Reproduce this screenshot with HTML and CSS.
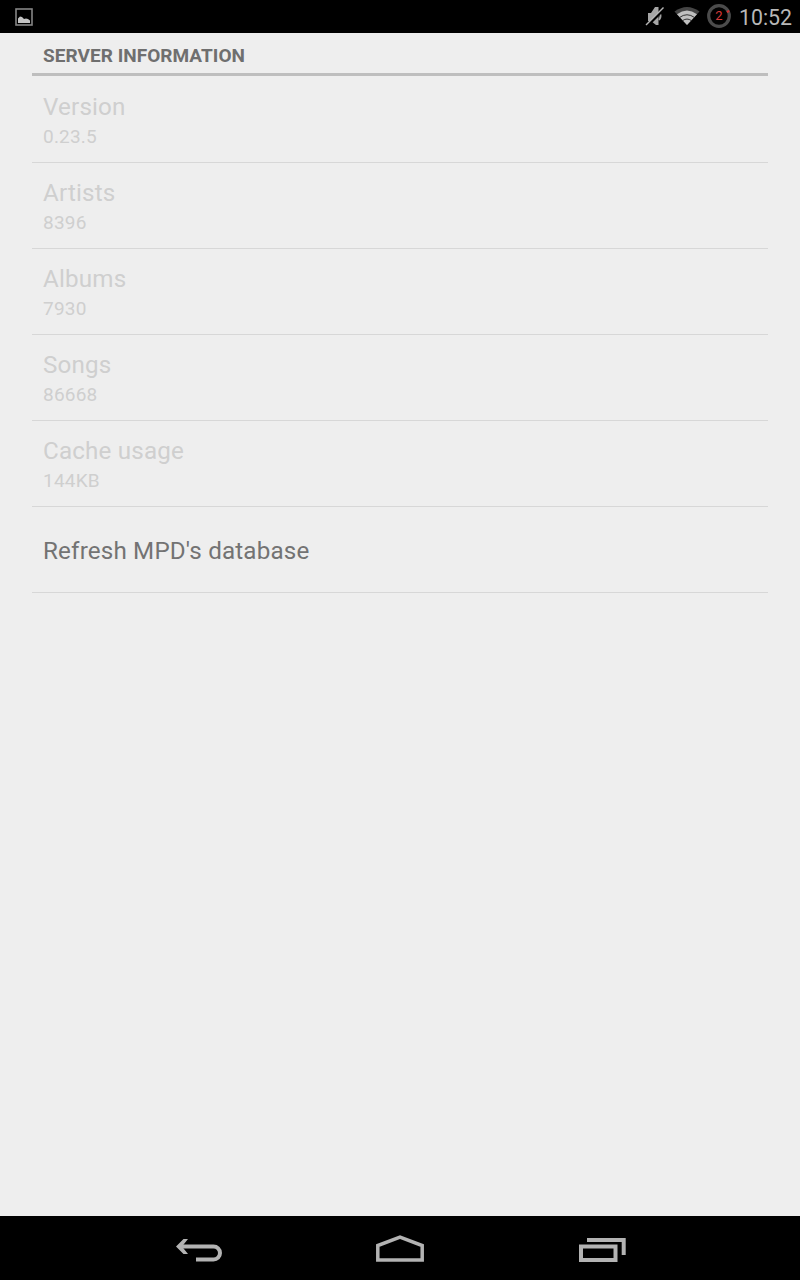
FILE: index.html
```html
<!DOCTYPE html>
<html lang="en">
<head>
<meta charset="utf-8">
<title>Server information</title>
<link rel="stylesheet" href="styles.css">
</head>
<body>
<header class="status-bar">
  <svg class="picture" width="18" height="18" viewBox="0 0 18 18"><rect x="1" y="1" width="16" height="16" fill="none" stroke="#858585" stroke-width="1.6"/><path d="M3 15V10.5L5 8.5L7 9L9 11L11 10.5L13 11L15 12.5V15Z" fill="#c4c4c4"/></svg>
  <div class="status-icons">
    <svg class="muted" width="20" height="24" viewBox="0 0 20 24"><path d="M3 9H6L10 3H13.5V21H11L6 17H3Z" fill="#a5a5a5"/><path d="M14 8Q17 12 14 16" fill="none" stroke="#a0a0a0" stroke-width="2"/><path d="M2.2 21.800L19.500 4.500" stroke="#000" stroke-width="3"/><path d="M1 21L18.500 3.500" stroke="#b5b5b5" stroke-width="1.500"/></svg>
    <svg class="wifi" width="26" height="20" viewBox="0 0 26 20"><path d="M0.500 5.500Q13 -3.500 25.500 5.500L13 19Z" fill="#454545"/><path d="M3 8.200Q13 .8 23 8.200L13 19Z" fill="#c0c0c0"/><path d="M5.500 11.500Q13 6 20.500 11.500M8.500 14.700Q13 11.400 17.500 14.700" fill="none" stroke="#222" stroke-width=".9"/></svg>
    <span class="battery">
      <svg width="24" height="24" viewBox="0 0 24 24"><circle cx="12" cy="12" r="10.300" fill="none" stroke="#4b4b4b" stroke-width="3.200"/><path d="M19.800 8L22.300 7" stroke="#d03030" stroke-width="2"/></svg>
      <span class="battery-level">2</span>
    </span>
    <span class="clock">10:52</span>
  </div>
</header>
<main class="preferences">
  <h1 class="category">SERVER INFORMATION</h1>
  <section class="row disabled"><div class="title">Version</div><div class="summary">0.23.5</div></section>
  <section class="row disabled"><div class="title">Artists</div><div class="summary">8396</div></section>
  <section class="row disabled"><div class="title">Albums</div><div class="summary">7930</div></section>
  <section class="row disabled"><div class="title">Songs</div><div class="summary">86668</div></section>
  <section class="row disabled"><div class="title">Cache usage</div><div class="summary">144KB</div></section>
  <section class="row action"><div class="title">Refresh MPD's database</div></section>
</main>
<nav class="nav-bar">
  <svg width="70" height="50" viewBox="0 0 70 50"><path d="M14.500 21.500H48.500A6.500 6.500 0 0 1 48.500 34.500H31" fill="none" stroke="#b3b3b3" stroke-width="4"/><path d="M11 21.500L18.500 14H23L17 21.500L23 29H18.500Z" fill="#b3b3b3"/></svg>
  <svg width="70" height="50" viewBox="0 0 70 50"><path d="M12.800 35V20.500L35 12L57.200 20.500V35Z" fill="none" stroke="#b3b3b3" stroke-width="3.500"/></svg>
  <svg width="70" height="50" viewBox="0 0 70 50"><path d="M16 21.500H50.500V35H16Z" fill="none" stroke="#b3b3b3" stroke-width="4"/><path d="M22 15H58.700V30" fill="none" stroke="#b3b3b3" stroke-width="4"/></svg>
</nav>
</body>
</html>
```
FILE: styles.css
```css
* { box-sizing: border-box; }
body {
  margin: 0;
  height: 1280px;
  display: flex;
  flex-direction: column;
  background: #eee;
  font-family: Roboto, sans-serif;
}
svg { display: block; flex: none; }
.status-bar {
  height: 33px;
  display: flex;
  align-items: center;
  justify-content: space-between;
  padding: 0 8px 0 15px;
  background: #000;
}
.status-icons { display: flex; align-items: center; }
.muted { margin-top: -2px; }
.wifi { margin: -1px 7px 0 9px; }
.battery { display: grid; place-items: center; margin: -1px 8px 0 0; }
.battery > * { grid-area: 1 / 1; }
.battery-level { color: #d93a3a; font-size: 13px; line-height: 24px; }
.clock { color: #b8b8b8; font-size: 21.3px; line-height: 33px; padding-top: 1px; height: 33px; }
.preferences { flex: 1; padding: 0 32px; }
.category {
  height: 43px;
  margin: 0 0 1px;
  padding: 0 11px;
  border-bottom: 3px solid #bebebe;
  color: #6f6f6f;
  font-size: 19px;
  font-weight: 700;
  letter-spacing: 0.04px;
  line-height: 45px;
}
.row {
  height: 86px;
  padding: 0 11px;
  border-bottom: 1px solid #d7d7d7;
  display: flex;
  flex-direction: column;
  justify-content: center;
  color: #737373;
}
.disabled { color: #cfcfcf; }
.action { padding-top: 2px; }
.title { font-size: 24.2px; line-height: 32px; letter-spacing: 0.17px; }
.summary { font-size: 19px; line-height: 26px; letter-spacing: 0.2px; padding-top: 1px; margin-bottom: -1px; }
.nav-bar {
  height: 64px;
  padding: 9px 165px 0;
  display: flex;
  justify-content: space-between;
  background: #000;
}
```
